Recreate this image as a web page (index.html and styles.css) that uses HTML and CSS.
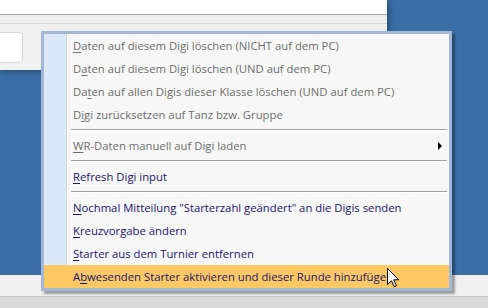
FILE: index.html
```html
<!DOCTYPE html>
<html lang="de">
<head>
    <meta charset="UTF-8">
    <title>Digi Menü</title>
    <link rel="stylesheet" href="styles.css">
</head>
<body>
    <div class="screen">
        <!-- Fenster oben -->
        <div class="app">
            <div class="app-title"></div>
            <div class="app-toolbar"></div>
            <div class="app-content">
                <div class="textbox"></div>
            </div>
        </div>

        <div class="desktop"></div>

        <div class="taskbar"></div>

        <!-- Kontextmenü -->
        <div class="menu">
            <div class="item disabled"><u>D</u>aten auf diesem Digi löschen (NICHT auf dem PC)</div>
            <div class="item disabled">D<u>a</u>ten auf diesem Digi löschen (UND auf dem PC)</div>
            <div class="item disabled">Da<u>t</u>en auf allen Digis dieser Klasse löschen (UND auf dem PC)</div>
            <div class="item disabled">D<u>i</u>gi zurücksetzen auf Tanz bzw. Gruppe</div>
            <div class="separator"></div>
            <div class="item disabled"><u>W</u>R-Daten manuell auf Digi laden<span class="arrow"></span></div>
            <div class="separator"></div>
            <div class="item"><u>R</u>efresh Digi input</div>
            <div class="separator"></div>
            <div class="item"><u>N</u>ochmal Mitteilung "Starterzahl geändert" an die Digis senden</div>
            <div class="item"><u>K</u>reuzvorgabe ändern</div>
            <div class="item"><u>S</u>tarter aus dem Turnier entfernen</div>
            <div class="item active">A<u>b</u>wesenden Starter aktivieren und dieser Runde hinzufügen</div>
        </div>

        <svg class="cursor" width="13" height="20" viewBox="0 0 13 20">
            <path d="M0.5 0.5 L0.5 16.5 L4.5 12.8 L7.2 18.8 L9.4 17.8 L6.8 11.8 L11.8 11.8 Z" fill="#fff" stroke="#000" stroke-width="1"/>
        </svg>
    </div>
</body>
</html>
```

FILE: styles.css
```css
body {
    margin: 0;
    padding: 0;
    font-family: "Open Sans", "Noto Sans", sans-serif;
}

.screen {
    width: 488px;
    height: 308px;
    position: relative;
    overflow: hidden;
    background: #3a6ea5;
    display: flex;
    flex-direction: column;
}

.app {
    width: 387px;
    height: 70px;
    background: #f0f0f0;
    box-shadow: 0 0 8px rgba(0, 0, 0, 0.45);
    position: relative;
    z-index: 1;
}

.app-title {
    height: 14px;
    background: #fff;
    border-bottom: 1px solid #a0a0a0;
}

.app-toolbar {
    height: 8px;
    border-bottom: 1px solid #d9d9d9;
}

.app-content {
    padding-top: 8px;
}

.textbox {
    width: 26px;
    height: 29px;
    margin-left: -5px;
    background: #fff;
    border: 1px solid #d5d5d5;
    border-radius: 4px;
}

.desktop {
    flex: 1;
}

.taskbar {
    height: 21px;
    background: #f0f0f0;
    border-bottom: 1px solid #c4c4c4;
    margin-bottom: 11px;
    box-shadow: 0 11px 0 #dadada;
}

.menu {
    position: absolute;
    left: 41px;
    top: 31px;
    width: 405px;
    border: 3px solid #a2b8d5;
    background: linear-gradient(to right, #dbe9f9 0, #dbe9f9 22px, #c8d3e0 22px, #c8d3e0 23px, #fff 23px, #fff 24px, #f7f7f7 24px);
    box-shadow: 3px 3px 2px rgba(0, 0, 0, 0.35);
    z-index: 2;
    font-size: 11.3px;
}

.item {
    height: 23px;
    line-height: 23px;
    padding-left: 29px;
    color: #1a1470;
    white-space: nowrap;
    position: relative;
}

.item u {
    text-decoration-thickness: 1px;
    text-underline-offset: 2px;
}

.item.disabled {
    color: #6d6d6d;
}

.item.active {
    background: #fec865;
}

.separator {
    height: 8px;
    margin-left: 27px;
    margin-right: 2px;
    background: linear-gradient(#f7f7f7 3px, #a0a0a0 3px, #a0a0a0 4px, #fff 4px, #fff 5px, #f7f7f7 5px);
}

.arrow {
    position: absolute;
    right: 7px;
    top: 8px;
    width: 0;
    height: 0;
    border-top: 4px solid transparent;
    border-bottom: 4px solid transparent;
    border-left: 4px solid #000;
}

.cursor {
    position: absolute;
    left: 387px;
    top: 268px;
    z-index: 3;
}
```
